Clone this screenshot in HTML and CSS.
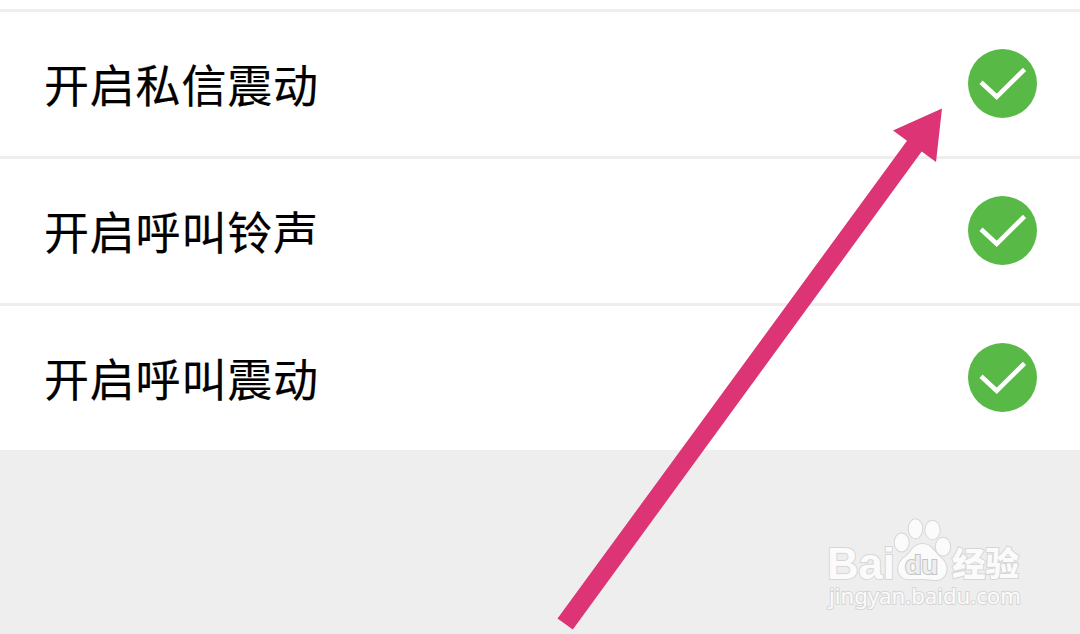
FILE: index.html
```html
<!DOCTYPE html>
<html lang="zh-CN">
  <head>
    <meta charset="utf-8" />
    <meta name="viewport" content="width=device-width, initial-scale=1.0" />
    <title>设置</title>
    <link rel="stylesheet" href="styles.css">
  </head>
  <body>
    <svg class="symbols" aria-hidden="true">
      <symbol id="check" viewBox="0 0 69 69">
        <circle cx="34.5" cy="34.5" r="34.5" fill="#58b947" />
        <path d="M13 33.2 28.7 47.8 56.5 20.4" fill="none" stroke="#fff" stroke-width="4.6" />
      </symbol>
    </svg>

    <ul class="settings">
      <li class="settings-item">
        <span class="settings-label">开启私信震动</span>
        <svg class="settings-check"><use href="#check" /></svg>
      </li>
      <li class="settings-item">
        <span class="settings-label">开启呼叫铃声</span>
        <svg class="settings-check"><use href="#check" /></svg>
      </li>
      <li class="settings-item">
        <span class="settings-label">开启呼叫震动</span>
        <svg class="settings-check"><use href="#check" /></svg>
      </li>
    </ul>

    <svg class="arrow" viewBox="0 0 1080 634">
      <path d="M942 108.5 893 130.5 907 140.8 557.5 618.5 572.8 629.5 921.7 151.5 936 162Z" />
    </svg>

    <svg class="watermark" viewBox="0 0 210 110">
      <text class="watermark-logo" x="7" y="68.5" textLength="68" lengthAdjust="spacingAndGlyphs">Bai</text>
      <g class="watermark-paw">
        <ellipse cx="81.7" cy="32.5" rx="7" ry="9" />
        <ellipse cx="95.5" cy="18.7" rx="6.8" ry="9.5" />
        <ellipse cx="112.5" cy="20" rx="7.2" ry="9.2" />
        <ellipse cx="123" cy="36.7" rx="7.2" ry="9" />
        <path d="M102 34C93 34 91 43 85 47C79 51 76 59 80 65C84 71 92 69 102 69C112 69 120 73 125 65C129 58 125 51 120 47C114 42 112 34 102 34Z" />
      </g>
      <text class="watermark-du" x="85" y="64" textLength="33" lengthAdjust="spacingAndGlyphs">du</text>
      <text class="watermark-cn" x="132" y="65.5" textLength="67" lengthAdjust="spacingAndGlyphs">经验</text>
      <text class="watermark-url" x="9" y="94" textLength="192" lengthAdjust="spacingAndGlyphs">jingyan.baidu.com</text>
    </svg>
  </body>
</html>
```
FILE: styles.css
```css
body {
  margin: 0;
  min-height: 634px;
  position: relative;
  overflow: hidden;
  background: #eee;
  font-family: "Noto Sans CJK SC", sans-serif;
}

.symbols {
  display: none;
}

.settings {
  margin: 0;
  padding: 9px 0 0;
  list-style: none;
  background: #fff;
}
.settings-item {
  display: flex;
  justify-content: space-between;
  align-items: center;
  height: 144px;
  padding: 0 43px 0 44px;
  border-top: 3px solid #eee;
}
.settings-label {
  font-size: 45px;
  line-height: 68px;
  letter-spacing: 0.8px;
  color: #000;
  -webkit-text-stroke: 0.2px #000;
}
.settings-check {
  width: 69px;
  height: 69px;
  margin-bottom: 1px;
}

/* overlays */
.arrow {
  position: absolute;
  top: 0;
  left: 0;
  width: 1080px;
  height: 634px;
  fill: #dc3475;
}

.watermark {
  position: absolute;
  top: 510px;
  left: 820px;
  width: 210px;
  height: 110px;
  fill: #fbfbfb;
  stroke: #d6d6d6;
  stroke-width: 2px;
  paint-order: stroke;
}
.watermark-logo {
  font: bold 45px "Liberation Sans", sans-serif;
}
.watermark-du {
  font: bold 26px "Liberation Sans", sans-serif;
  fill: #eee;
  stroke: #c4c4c4;
}
.watermark-cn {
  font-size: 33px;
  font-weight: 900;
}
.watermark-url {
  font: 22px "Noto Sans", sans-serif;
}
```
